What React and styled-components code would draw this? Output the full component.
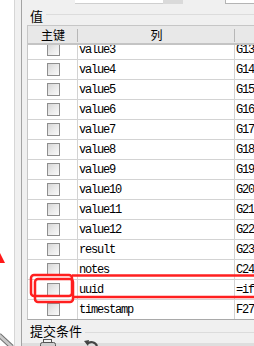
import React from 'react';
import styled, { createGlobalStyle } from 'styled-components';

const Global = createGlobalStyle`
  html, body { margin: 0; padding: 0; width: 254px; height: 346px; overflow: hidden; background: #f0f0f0; }
  #root { width: 254px; height: 346px; }
  * { box-sizing: border-box; }
`;

const Page = styled.div`
  position: relative;
  display: flex;
  width: 254px;
  height: 346px;
  overflow: hidden;
  background: #f0f0f0;
  font-family: "Noto Sans CJK SC", "Liberation Sans", sans-serif;
  color: #000;
`;

const SideStrip = styled.div`
  flex: none;
  width: 15px;
  background: #fff;
  border-right: 1px solid #d6d6d6;
`;

const Gutter = styled.div`
  flex: none;
  width: 7px;
  background: #f0f0f0;
  border-right: 1px solid #a3a3a3;
`;

const Main = styled.div`
  flex: 1;
  min-width: 0;
  display: flex;
  flex-direction: column;
  overflow: hidden;
`;

const TopBar = styled.div`
  display: flex;
  align-items: flex-start;
  height: 4px;
  padding-left: 53px;
  flex: none;
`;

const InputBox = styled.div`
  width: 88px;
  height: 4px;
  background: #fff;
  border-bottom: 1px solid #cfcfcf;
`;

const DropBtn = styled.div`
  width: 20px;
  height: 4px;
  background: #dadada;
`;

const RightBox = styled.div`
  flex: 1;
  margin-left: 42px;
  height: 4px;
  background: #fff;
  border-left: 1px solid #b4b4b4;
  border-bottom: 1px solid #b4b4b4;
`;

const GroupHead = styled.div`
  display: flex;
  align-items: center;
  flex: none;
  height: ${p => p.$h}px;
  padding-left: 8px;
`;

const GroupLabel = styled.span`
  font-size: 13px;
  line-height: 14px;
  margin-top: ${p => p.$shift || 0}px;
`;

const GroupLine = styled.div`
  flex: 1;
  height: 1px;
  margin-left: 3px;
  margin-top: ${p => p.$shift || 0}px;
  background: #dcdcdc;
`;

const Grid = styled.div`
  flex: none;
  margin-left: 5px;
  margin-right: -30px;
  border-left: 1px solid #c6c6c6;
  border-top: 1px solid #c6c6c6;
  border-bottom: 1px solid #a9a9a9;
  background: #fff;
`;

const cols = '50px 157px 1fr';

const HeaderRow = styled.div`
  display: grid;
  grid-template-columns: ${cols};
  height: 19px;
  background: #e8e8e8;
  border-bottom: 2px solid #c4c4c4;
`;

const HeadCell = styled.div`
  position: relative;
  text-align: center;
  font-size: 12px;
  line-height: 17px;
  &::after {
    content: '';
    display: ${p => (p.$sep ? 'block' : 'none')};
    position: absolute;
    right: 0;
    top: 3px;
    bottom: 1px;
    width: 1px;
    background: #b7b7b7;
  }
`;

const Body = styled.div`
  height: 274px;
  overflow: hidden;
`;

const BodyInner = styled.div`
  margin-top: -5px;
`;

const Row = styled.div`
  display: grid;
  grid-template-columns: ${cols};
  height: 20px;
  border-bottom: 1px solid #d3d3d3;
`;

const Cell = styled.div`
  display: flex;
  align-items: center;
  justify-content: ${p => (p.$center ? 'center' : 'flex-start')};
  padding-left: ${p => (p.$center ? 0 : 1)}px;
  border-right: 1px solid #d3d3d3;
  font-family: "Liberation Mono", "DejaVu Sans Mono", monospace;
  font-size: 12px;
  letter-spacing: -1.2px;
  white-space: nowrap;
  overflow: hidden;
`;

const Check = styled.span`
  display: block;
  width: 13px;
  height: 13px;
  margin-left: 2px;
  border: 1px solid #8f8f8f;
  background: linear-gradient(135deg, #d6d6d6 0%, #ececec 55%, #fbfbfb 100%);
`;

const Toolbar = styled.div`
  display: flex;
  align-items: flex-start;
  gap: 27px;
  flex: 1;
  padding-left: 18px;
  background: linear-gradient(to bottom, #f0f0f0 0, #f0f0f0 1px, #dedede 1px);
`;

const ToolIcon = styled.svg`
  flex: none;
  width: 16px;
  height: 16px;
  margin-top: ${p => p.$top}px;
`;

const Overlay = styled.svg`
  position: absolute;
  left: 0;
  top: 0;
  width: 254px;
  height: 346px;
  pointer-events: none;
`;

const rows = [
  ['value3', 'G13'],
  ['value4', 'G14'],
  ['value5', 'G15'],
  ['value6', 'G16'],
  ['value7', 'G17'],
  ['value8', 'G18'],
  ['value9', 'G19'],
  ['value10', 'G20'],
  ['value11', 'G21'],
  ['value12', 'G22'],
  ['result', 'G23'],
  ['notes', 'C24'],
  ['uuid', '=if'],
  ['timestamp', 'F27'],
];

export default function App() {
  return (
    <>
      <Global />
      <Page>
        <SideStrip />
        <Gutter />
        <Main>
          <TopBar>
            <InputBox />
            <DropBtn />
            <RightBox />
          </TopBar>
          <GroupHead $h={21}>
            <GroupLabel $shift={2}>值</GroupLabel>
            <GroupLine />
          </GroupHead>
          <Grid>
            <HeaderRow>
              <HeadCell $sep>主键</HeadCell>
              <HeadCell $sep>列</HeadCell>
              <HeadCell />
            </HeaderRow>
            <Body>
              <BodyInner>
                {rows.map(([name, ref]) => (
                  <Row key={name}>
                    <Cell $center>
                      <Check />
                    </Cell>
                    <Cell>{name}</Cell>
                    <Cell>{ref}</Cell>
                  </Row>
                ))}
              </BodyInner>
            </Body>
          </Grid>
          <GroupHead $h={22}>
            <GroupLabel $shift={0}>提交条件</GroupLabel>
            <GroupLine $shift={2} />
          </GroupHead>
          <Toolbar>
            <ToolIcon $top={-3} viewBox="0 0 16 16">
              <rect x="3.5" y="0.5" width="8" height="4" fill="#f4f4f4" stroke="#555" />
              <rect x="0.5" y="3.5" width="15" height="10" rx="2" fill="#cfcfcf" stroke="#555" />
            </ToolIcon>
            <ToolIcon $top={-5} viewBox="0 0 16 16">
              <path d="M4 7 A6 6 0 0 1 14 9" fill="none" stroke="#444" strokeWidth="2.2" />
              <path d="M1 4 L6 3 L5 9 Z" fill="#444" />
            </ToolIcon>
          </Toolbar>
        </Main>
        <Overlay viewBox="0 0 254 346">
          <polygon points="0,253 5,263 0,263" fill="#ff1a1a" />
          <line x1="-1" y1="335" x2="12" y2="347" stroke="#6f6f6f" strokeWidth="5" />
          <line x1="-1" y1="335" x2="12" y2="347" stroke="#c9c9c9" strokeWidth="3" />
          <rect x="31" y="275" width="41" height="21" rx="3" fill="none" stroke="#ff1f1f" strokeWidth="2.5" />
          <rect x="35" y="279" width="38" height="23" rx="3" fill="none" stroke="#ff1f1f" strokeWidth="2.5" />
          <line x1="72" y1="275.5" x2="260" y2="275.5" stroke="#ff1f1f" strokeWidth="2.5" />
          <line x1="72" y1="297" x2="260" y2="297" stroke="#ff1f1f" strokeWidth="2.5" />
        </Overlay>
      </Page>
    </>
  );
}
